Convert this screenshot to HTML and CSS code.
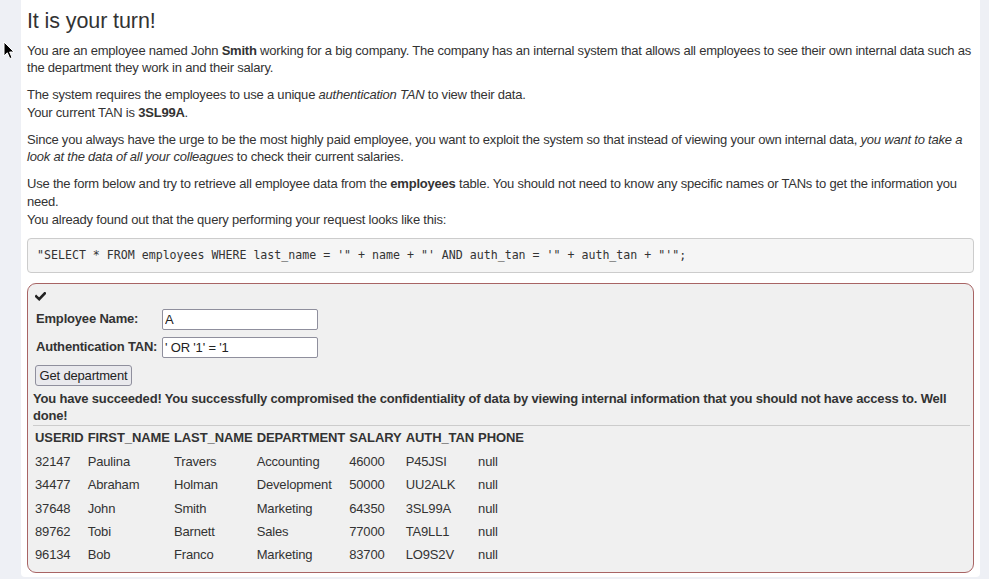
FILE: index.html
```html
<!DOCTYPE html>
<html lang="en">
<head>
<meta charset="utf-8">
<title>SQL Injection</title>
<link rel="stylesheet" href="styles.css">
</head>
<body>
<div class="panel">
  <h2 class="title">It is your turn!</h2>
  <p>You are an employee named John <b>Smith</b> working for a big company. The company has an internal system that allows all employees to see their own internal data such as the department they work in and their salary.</p>
  <p>The system requires the employees to use a unique <i>authentication TAN</i> to view their data.<br>Your current TAN is <b>3SL99A</b>.</p>
  <p>Since you always have the urge to be the most highly paid employee, you want to exploit the system so that instead of viewing your own internal data, <i>you want to take a look at the data of all your colleagues</i> to check their current salaries.</p>
  <p>Use the form below and try to retrieve all employee data from the <b>employees</b> table. You should not need to know any specific names or TANs to get the information you need.<br>You already found out that the query performing your request looks like this:</p>
  <pre class="code">"SELECT * FROM employees WHERE last_name = '" + name + "' AND auth_tan = '" + auth_tan + "'";</pre>

  <div class="attack">
    <div class="check">
      <svg width="11" height="9" viewBox="0 0 11 9"><polyline points="1.2,4.4 4.2,7.2 9.8,1.3" fill="none" stroke="#222" stroke-width="2.6" stroke-linecap="square"/></svg>
    </div>
    <form class="form">
      <label class="lbl">Employee Name:</label>
      <input class="field" type="text" value="A">
      <label class="lbl">Authentication TAN:</label>
      <input class="field" type="text" value="' OR '1' = '1">
    </form>
    <button class="btn" type="button">Get department</button>
    <p class="msg">You have succeeded! You successfully compromised the confidentiality of data by viewing internal information that you should not have access to. Well done!</p>
    <hr class="rule">
    <table class="data">
      <thead>
        <tr><th>USERID</th><th>FIRST_NAME</th><th>LAST_NAME</th><th>DEPARTMENT</th><th>SALARY</th><th>AUTH_TAN</th><th>PHONE</th></tr>
      </thead>
      <tbody>
        <tr><td>32147</td><td>Paulina</td><td>Travers</td><td>Accounting</td><td>46000</td><td>P45JSI</td><td>null</td></tr>
        <tr><td>34477</td><td>Abraham</td><td>Holman</td><td>Development</td><td>50000</td><td>UU2ALK</td><td>null</td></tr>
        <tr><td>37648</td><td>John</td><td>Smith</td><td>Marketing</td><td>64350</td><td>3SL99A</td><td>null</td></tr>
        <tr><td>89762</td><td>Tobi</td><td>Barnett</td><td>Sales</td><td>77000</td><td>TA9LL1</td><td>null</td></tr>
        <tr><td>96134</td><td>Bob</td><td>Franco</td><td>Marketing</td><td>83700</td><td>LO9S2V</td><td>null</td></tr>
      </tbody>
    </table>
  </div>
</div>
<svg class="cursor" width="13" height="19" viewBox="0 0 13 19"><path d="M1 1 L1 15 L4.3 11.8 L6.8 17.6 L9 16.6 L6.6 11 L11 11 Z" fill="#000" stroke="#fff" stroke-width="1"/></svg>
</body>
</html>
```
FILE: styles.css
```css
html, body {
  margin: 0;
  padding: 0;
  background: #eef0f5;
}
body {
  font-family: "Liberation Sans", Arial, sans-serif;
  font-size: 13px;
  line-height: 17.6px;
  letter-spacing: -0.21px;
  color: #333;
}
.panel {
  margin-left: 21px;
  width: 947px;
  padding: 1px 6px 4px;
  background: #fff;
  border-radius: 0 0 4px 4px;
}
.title {
  font-size: 21.5px;
  font-weight: normal;
  line-height: 1.1;
  letter-spacing: -0.1px;
  margin: 9px 0 8px;
}
p {
  margin: 0 0 9.4px;
}
.code {
  margin: 0 0 10px;
  padding: 8px 9px;
  font-family: "DejaVu Sans Mono", monospace;
  font-size: 11.6px;
  line-height: 17px;
  letter-spacing: 0;
  background: #f5f5f5;
  border: 1px solid #ccc;
  border-radius: 4px;
  color: #333;
  white-space: pre-wrap;
}
.attack {
  background: #f0f0f0;
  border: 1px solid #a86464;
  border-radius: 9px;
  padding: 4px 3px 5px 5px;
}
.check {
  height: 18px;
  display: flex;
  align-items: center;
  padding-left: 2px;
}
.check svg { display: block; }
.form {
  display: grid;
  grid-template-columns: 129px 156px;
  row-gap: 7px;
  align-items: center;
  padding: 3px 0 0;
  margin: 0;
}
.lbl {
  font-weight: bold;
  padding-left: 3px;
  letter-spacing: -0.18px;
}
.field {
  box-sizing: border-box;
  width: 156px;
  height: 21px;
  margin: 0;
  padding: 0 2px;
  border: 1px solid #8f8f9d;
  border-radius: 2px;
  background: #fff;
  font-family: "Liberation Sans", Arial, sans-serif;
  font-size: 13px;
  letter-spacing: -0.18px;
  color: #222;
}
.btn {
  display: block;
  box-sizing: border-box;
  margin: 7px 0 0 2px;
  height: 21px;
  width: 97px;
  padding: 0;
  border: 1px solid #8f8f9d;
  border-radius: 3px;
  background: #e9e9ed;
  font-family: "Liberation Sans", Arial, sans-serif;
  font-size: 13px;
  letter-spacing: -0.18px;
  color: #222;
}
.msg {
  font-weight: bold;
  margin: 4px 0 0;
  letter-spacing: -0.18px;
}
.rule {
  border: 0;
  border-top: 1px solid #ccc;
  margin: 0;
}
.data {
  border-collapse: collapse;
}
.data th, .data td {
  text-align: left;
  padding: 2.9px 2px;
  white-space: nowrap;
  letter-spacing: -0.15px;
}
.data th {
  font-weight: bold;
  letter-spacing: -0.08px;
  padding-top: 3.2px;
  padding-bottom: 3.4px;
}
.cursor {
  position: absolute;
  left: 3px;
  top: 41px;
}
```
